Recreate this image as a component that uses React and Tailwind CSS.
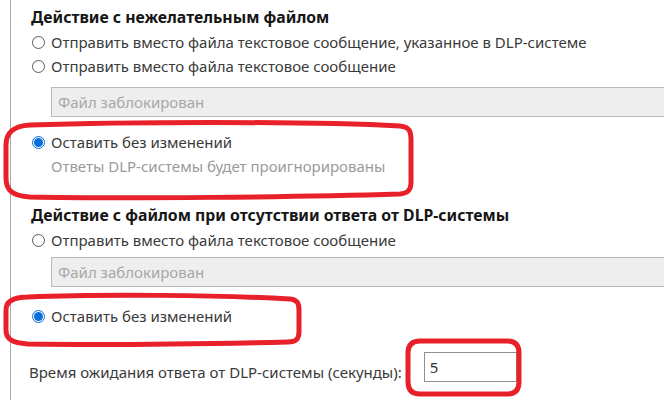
import React from "react";

function Radio({ checked }) {
  if (checked) {
    return (
      <span className="w-[13px] h-[13px] rounded-full border border-[#0a6fd8] flex items-center justify-center shrink-0 bg-white">
        <span className="w-[9px] h-[9px] rounded-full bg-[#0a6fd8]" />
      </span>
    );
  }
  return <span className="w-[13px] h-[13px] rounded-full border border-[#5a5a5a] shrink-0 bg-white" />;
}

function Option({ checked, children }) {
  return (
    <div className="flex items-center h-[24px] gap-[6px] pl-[1px] text-[15px] text-[#3a3a3a]">
      <Radio checked={checked} />
      <span className="whitespace-nowrap">{children}</span>
    </div>
  );
}

function Heading({ children }) {
  return (
    <div className="h-[24px] flex items-center text-[15.8px] font-bold text-[#161616] whitespace-nowrap">
      {children}
    </div>
  );
}

function DisabledInput({ className }) {
  return (
    <div
      className={
        "ml-[20px] w-[640px] h-[30px] bg-[#eeeeee] border border-[#b9b9b9] flex items-center pl-[6px] text-[15px] text-[#a8a8a8] " +
        className
      }
    >
      Файл заблокирован
    </div>
  );
}

export default function App() {
  return (
    <div
      className="relative w-[664px] h-[400px] overflow-hidden bg-white"
      style={{ fontFamily: '"Noto Sans", "Open Sans", sans-serif' }}
    >
      <div className="ml-[10px] h-full border-l border-[#a9a9a9] pl-[20px] pt-[6px]">
        <Heading>Действие с нежелательным файлом</Heading>
        <Option>Отправить вместо файла текстовое сообщение, указанное в DLP-системе</Option>
        <Option>Отправить вместо файла текстовое сообщение</Option>
        <DisabledInput className="mt-[9px]" />
        <div className="mt-[13px]">
          <Option checked>Оставить без изменений</Option>
        </div>
        <div className="ml-[20px] h-[24px] flex items-center text-[15px] text-[#9a9a9a] whitespace-nowrap">
          Ответы DLP-системы будет проигнорированы
        </div>
        <div className="mt-[26px]">
          <Heading>Действие с файлом при отсутствии ответа от DLP-системы</Heading>
        </div>
        <Option>Отправить вместо файла текстовое сообщение</Option>
        <DisabledInput className="mt-[5px]" />
        <div className="mt-[17px]">
          <Option checked>Оставить без изменений</Option>
        </div>
        <div className="mt-[24px] flex items-start text-[15px] text-[#3a3a3a]">
          <span className="ml-[-2px] mt-[8px] h-[24px] flex items-center whitespace-nowrap">
            Время ожидания ответа от DLP-системы (секунды):
          </span>
          <div className="ml-[22px] w-[93px] h-[30px] border border-[#8f8f8f] flex items-center pl-[5px] text-[#333]">
            5
          </div>
        </div>
      </div>

      <svg className="absolute inset-0 pointer-events-none" width="664" height="400" viewBox="0 0 664 400">
        <g fill="none" stroke="#e8202a" strokeWidth="5" strokeLinejoin="round">
          <path d="M30 125 C120 122 300 121 400 126 C410 127 411 132 411 140 L411 182 C411 190 408 193 400 194 C300 197 120 199 30 197 C12 196 6 190 6 178 L6 145 C6 132 14 126 30 125 Z" />
          <path d="M28 297 C100 294 220 295 290 299 C298 300 299 304 299 310 L299 332 C299 339 296 342 288 342 C200 344 100 345 28 344 C12 343 6 339 6 330 L6 310 C6 301 14 297 28 297 Z" />
          <path d="M420 341 L507 341 C515 341 519 345 519 353 L519 382 C519 390 515 394 507 394 L420 394 C412 394 408 390 408 382 L408 353 C408 345 412 341 420 341 Z" />
        </g>
      </svg>
    </div>
  );
}
